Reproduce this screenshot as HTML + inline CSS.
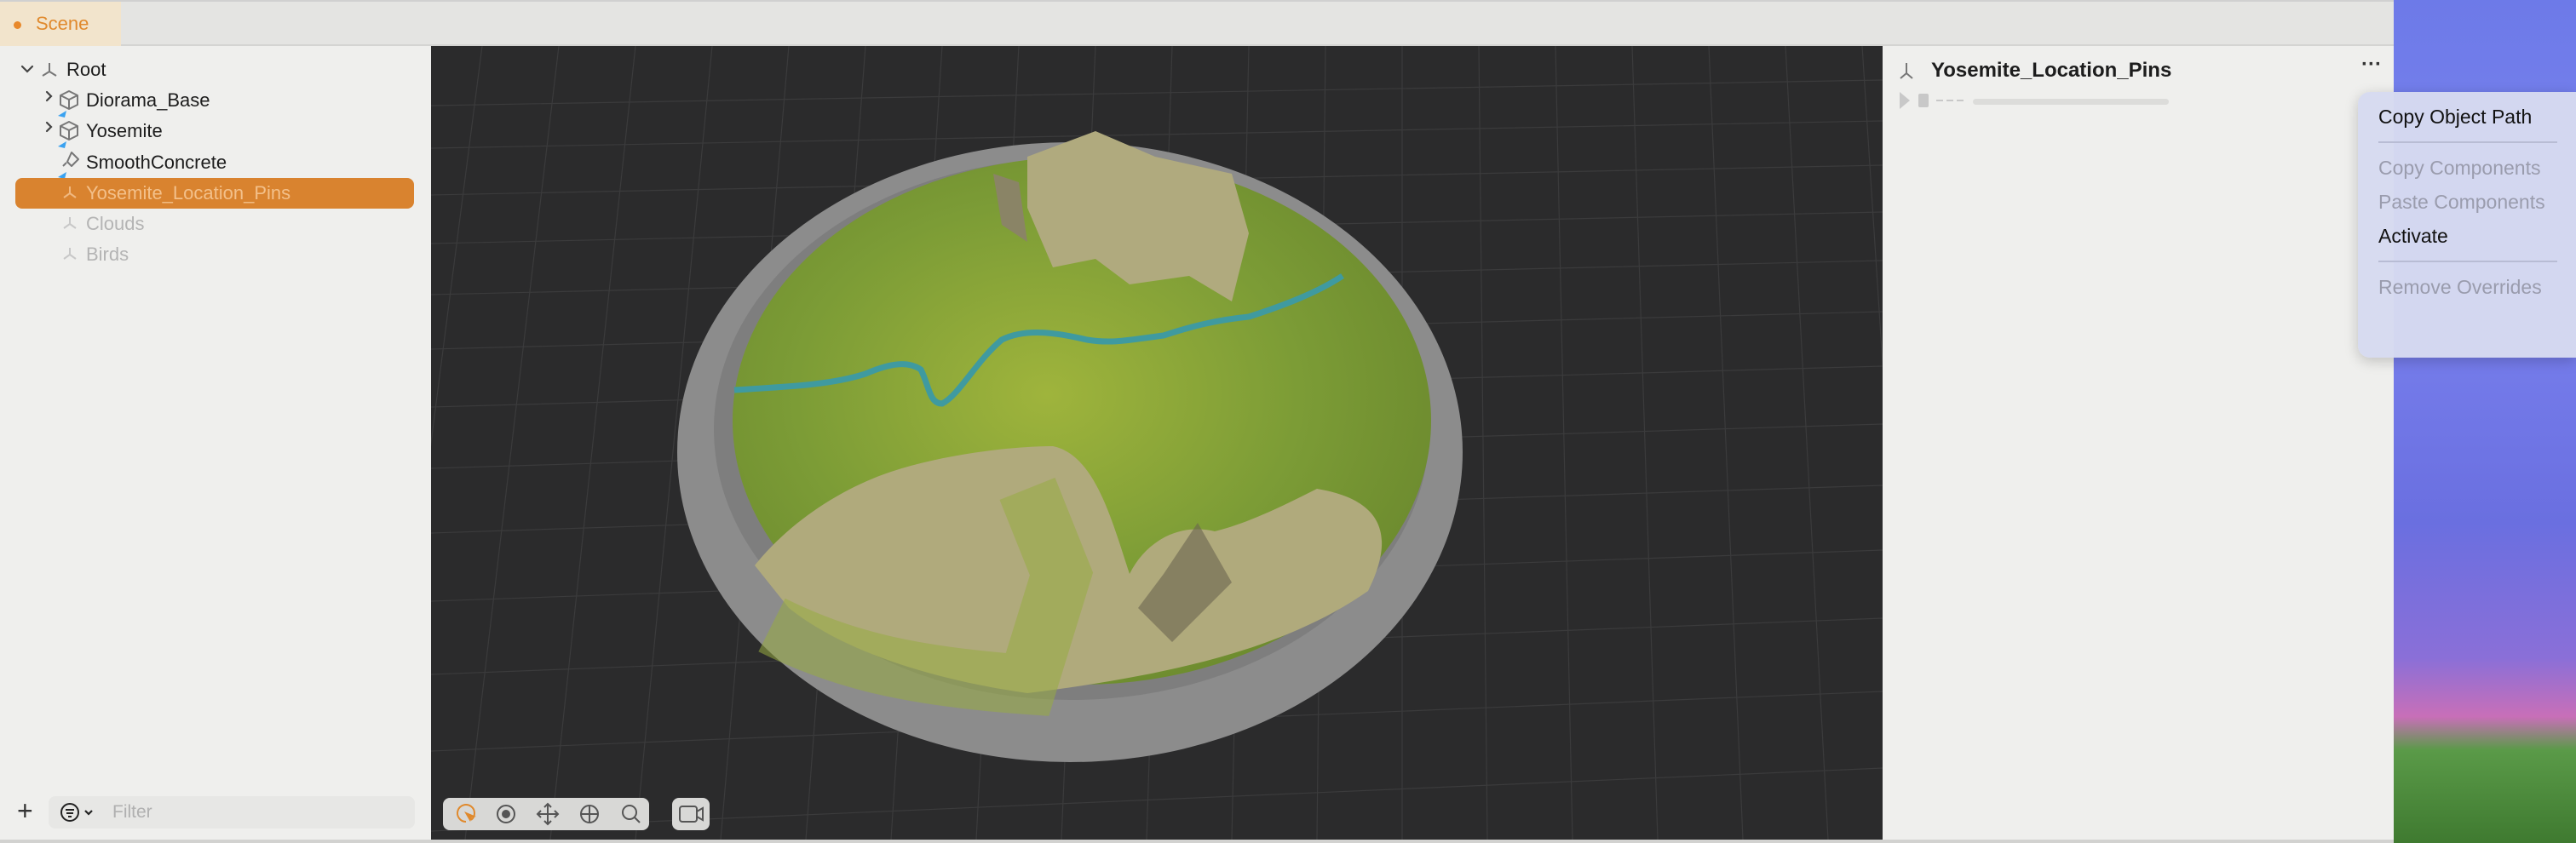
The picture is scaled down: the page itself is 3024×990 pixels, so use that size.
<!DOCTYPE html>
<html><head><meta charset="utf-8"><style>
*{margin:0;padding:0;box-sizing:border-box}
body{width:3024px;height:990px;overflow:hidden;background:#efefed;font-family:"Liberation Sans",sans-serif;position:relative}
.tabbar{position:absolute;left:0;top:0;width:2810px;height:54px;background:#e4e4e2;border-top:2px solid #d0d0d0;border-bottom:2px solid #d4d4d2}
.tab{position:absolute;left:0;top:0;width:142px;height:52px;background:#f2e4cc;color:#e08a2e;font-size:22px;line-height:52px;padding-left:42px}
.tab:before{content:"";position:absolute;left:16px;top:23px;width:9px;height:9px;border-radius:50%;background:#e8892c}
.left{position:absolute;left:0;top:54px;width:506px;height:932px;background:#efefed}
.row{position:absolute;font-size:22px;color:#1d1d1d;height:36px;line-height:36px}
.vp{position:absolute;left:506px;top:54px;width:1704px;height:932px;background:#2b2b2c;overflow:hidden}
.right{position:absolute;left:2210px;top:54px;width:600px;height:932px;background:#efefed}
.desk{position:absolute;left:2810px;top:0;width:214px;height:990px;background:linear-gradient(180deg,#6d7ae8 0%,#7b83f0 30%,#6a6fe0 62%,#8a6fd8 78%,#c86fb8 85%,#5a9a48 89%,#3f7a30 100%)}
.menu{position:absolute;left:2768px;top:108px;width:256px;height:312px;background:rgba(214,218,240,.97);border-radius:14px 0 0 14px;box-shadow:0 4px 16px rgba(0,0,0,.2);font-size:23px}
.mi{position:absolute;left:24px}
.sep{position:absolute;left:24px;width:210px;height:2px;background:#b8bcd4}
.bottom{position:absolute;left:0;top:986px;width:2810px;height:4px;background:#d2d2d0}
</style></head><body>
<div class="tabbar"><div class="tab">Scene</div></div>
<div class="left">
 <svg style="position:absolute;left:0;top:0" width="506" height="260">
  <g fill="none" stroke="#444" stroke-width="2.2" stroke-linecap="round">
   <path d="M26 24l6 6 6-6"/>
   <path d="M55 54l5 5-5 5"/>
   <path d="M55 90l5 5-5 5"/>
  </g>
  <g fill="none" stroke="#777" stroke-width="2" stroke-linejoin="round">
   <path d="M58 20v10M58 30l-8 5M58 30l8 5"/>
   <path d="M81 53l10 5v11l-10 5-10-5V58zM71 58l10 5 10-5M81 63v11"/>
   <path d="M81 89l10 5v11l-10 5-10-5V94zM71 94l10 5 10-5M81 99v11"/>
   <path d="M84 125l8 8-8 8-5-5zM78 137l-4 4"/>
  </g>
  <g fill="#3aa2f0"><path d="M68 82l10-6-2 8zM68 118l10-6-2 8zM68 154l10-6-2 8z"/></g>
  <rect x="18" y="155" width="468" height="36" rx="8" fill="#d9832f"/>
  <g fill="none" stroke="#f0b880" stroke-width="2"><path d="M82 165v8l-7 5M82 173l7 5"/></g>
  <g fill="none" stroke="#c8c8c8" stroke-width="2"><path d="M82 201v8l-7 5M82 209l7 5M82 237v8l-7 5M82 245l7 5"/></g>
 </svg>
 <div class="row" style="left:78px;top:10px">Root</div>
 <div class="row" style="left:101px;top:46px">Diorama_Base</div>
 <div class="row" style="left:101px;top:82px">Yosemite</div>
 <div class="row" style="left:101px;top:119px">SmoothConcrete</div>
 <div class="row" style="left:101px;top:155px;color:#f3c08a">Yosemite_Location_Pins</div>
 <div class="row" style="left:101px;top:191px;color:#b4b4b4">Clouds</div>
 <div class="row" style="left:101px;top:227px;color:#b4b4b4">Birds</div>
 <div style="position:absolute;left:20px;top:882px;font-size:32px;color:#333;line-height:32px">+</div>
 <div style="position:absolute;left:57px;top:881px;width:430px;height:38px;background:#e7e7e5;border-radius:8px"></div>
 <svg style="position:absolute;left:68px;top:887px" width="50" height="26"><circle cx="14" cy="13" r="10" fill="none" stroke="#222" stroke-width="2"/><path d="M9 10h10M10 14h8M12 18h4" stroke="#222" stroke-width="2"/><path d="M32 11l4 4 4-4" fill="none" stroke="#222" stroke-width="2.2"/></svg>
 <div style="position:absolute;left:132px;top:885px;font-size:21px;color:#b0b0b0;line-height:30px">Filter</div>
</div>
<div class="vp">
 <svg width="1704" height="932" viewBox="0 0 1704 932">
  <defs>
   <radialGradient id="g" cx="45%" cy="45%" r="60%"><stop offset="0" stop-color="#9fb43c"/><stop offset=".6" stop-color="#7c9c36"/><stop offset="1" stop-color="#6c8a2e"/></radialGradient>
  </defs>
  <g stroke="#3b3b3c" stroke-width="1.2">
   <path d="M0 70L1704 40M0 120L1704 88M0 175L1704 140M0 232L1704 195M0 292L1704 252M0 356L1704 312M0 424L1704 376M0 496L1704 444M0 572L1704 516M0 652L1704 592M0 738L1704 672M0 828L1704 758M0 922L1704 848"/>
   <path d="M-60 932L60 0M40 932L150 0M140 932L240 0M240 932L330 0M340 932L420 0M440 932L510 0M540 932L600 0M640 932L690 0M740 932L780 0M840 932L870 0M940 932L960 0M1040 932L1050 0M1140 932L1140 0M1240 932L1230 0M1340 932L1320 0M1440 932L1410 0M1540 932L1500 0M1640 932L1590 0M1740 932L1680 0"/>
  </g>
  <ellipse cx="750" cy="477" rx="461" ry="364" fill="#8c8c8c"/>
  <ellipse cx="752" cy="450" rx="420" ry="318" fill="#7e7e7e"/>
  <ellipse cx="764" cy="440" rx="410" ry="310" fill="url(#g)"/>
  <path d="M700 130l80-30 70 30 90 20 20 70-20 80-50-30-70 10-40-30-50 10-30-70z" fill="#b0aa7e"/>
  <path d="M660 150l30 10 10 70-30-20z" fill="#8a8466"/>
  <path d="M380 610C420 560 480 520 540 500 600 480 680 470 730 470 780 480 800 560 820 620 840 580 880 560 920 570 960 560 1000 540 1040 520 1100 530 1140 560 1100 640 1000 710 860 740 700 760 560 740 470 700 420 660 390 640 380 610z" fill="#b0aa7c"/>
  <path d="M400 680C480 720 560 740 700 750L740 620 700 520" fill="none" stroke="#98ac42" stroke-width="70" opacity=".55"/>
  <path d="M900 560l-40 60-30 40 40 40 70-70z" fill="#6a6450" opacity=".6"/>
  <path d="M356 404C420 400 470 398 510 385 540 372 560 370 575 380 585 400 585 420 600 420 620 410 640 370 670 345 700 330 740 338 770 345 800 350 820 345 860 340 890 330 920 322 960 318 1000 305 1040 290 1070 270 1080 250" fill="none" stroke="#3f9aa0" stroke-width="7"/>
 </svg>
 <div style="position:absolute;left:14px;top:883px;width:242px;height:38px;background:#d8d8d6;border-radius:8px"></div>
 <div style="position:absolute;left:283px;top:883px;width:44px;height:38px;background:#d8d8d6;border-radius:8px"></div>
 <svg style="position:absolute;left:14px;top:883px" width="320" height="38" fill="none" stroke="#555" stroke-width="2">
  <path d="M27 28A10 10 0 1 1 33 26" stroke="#e0892c"/><path d="M25 16l7 12 2-5 5-1z" fill="#e0892c" stroke="none"/>
  <circle cx="74" cy="19" r="10"/><circle cx="74" cy="19" r="4" fill="#555"/>
  <path d="M123 7v24M111 19h24M119 11l4-4 4 4M119 27l4 4 4-4M115 15l-4 4 4 4M131 15l4 4-4 4"/>
  <circle cx="172" cy="19" r="10"/><path d="M162 19h20M172 9v20"/>
  <circle cx="219" cy="17" r="8"/><path d="M225 23l6 6"/>
  <rect x="278" y="10" width="20" height="18" rx="3"/><path d="M298 16l7-4v14l-7-4"/>
 </svg>
</div>
<div class="right">
 <svg style="position:absolute;left:16px;top:16px" width="30" height="30" fill="none" stroke="#777" stroke-width="2"><path d="M12 4v12l-7 6M12 16l7 6"/></svg>
 <div style="position:absolute;left:57px;top:15px;font-size:24px;font-weight:bold;color:#1d1d1d">Yosemite_Location_Pins</div>
 <div style="position:absolute;left:562px;top:8px;font-size:24px;font-weight:bold;color:#333">···</div>
 <svg style="position:absolute;left:18px;top:52px" width="120" height="26"><path d="M2 2v20l12-10z" fill="#c8c8c8"/><rect x="24" y="4" width="12" height="16" rx="2" fill="#c8c8c8"/><path d="M45 12h34" stroke="#c8c8c8" stroke-width="2" stroke-dasharray="8 4"/></svg>
 <div style="position:absolute;left:106px;top:62px;width:230px;height:7px;border-radius:4px;background:#dcdcda"></div>
</div>
<div class="desk"></div>
<div class="menu">
 <div class="mi" style="top:16px;color:#111">Copy Object Path</div>
 <div class="sep" style="top:58px"></div>
 <div class="mi" style="top:76px;color:#9a9cad">Copy Components</div>
 <div class="mi" style="top:116px;color:#9a9cad">Paste Components</div>
 <div class="mi" style="top:156px;color:#111">Activate</div>
 <div class="sep" style="top:198px"></div>
 <div class="mi" style="top:216px;color:#9a9cad">Remove Overrides</div>
</div>
<div class="bottom"></div>
</body></html>
